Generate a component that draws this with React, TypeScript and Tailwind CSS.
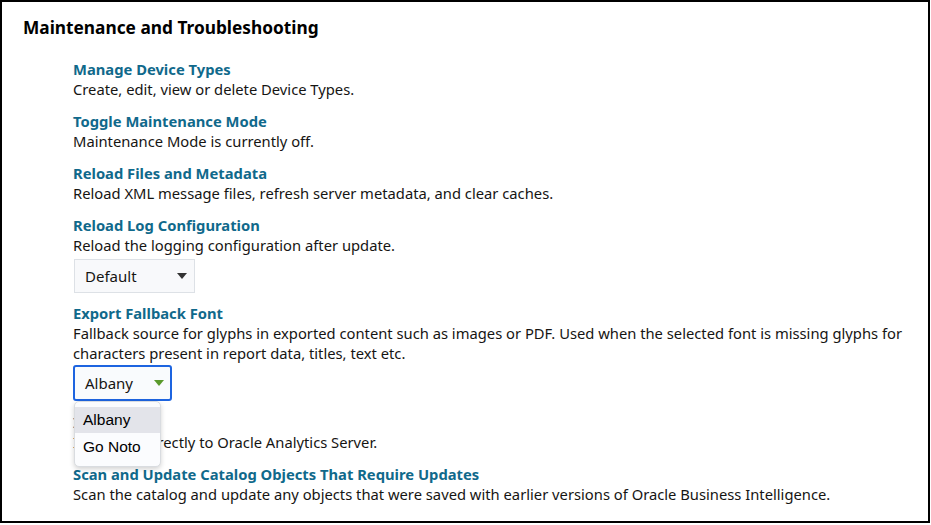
import React from "react";

const items: { title: string; desc: string[] }[] = [
  { title: "Manage Device Types", desc: ["Create, edit, view or delete Device Types."] },
  { title: "Toggle Maintenance Mode", desc: ["Maintenance Mode is currently off."] },
  {
    title: "Reload Files and Metadata",
    desc: ["Reload XML message files, refresh server metadata, and clear caches."],
  },
];

function Caret({ color }: { color: string }) {
  return (
    <svg width="10" height="6" viewBox="0 0 10 6" className="shrink-0">
      <path d="M0 0 L10 0 L5 6 Z" fill={color} />
    </svg>
  );
}

function Item({ title, children, className = "mb-3" }: { title: string; children?: React.ReactNode; className?: string }) {
  return (
    <div className={className}>
      <div className="text-[14.75px] leading-5 font-bold text-[#10698b]">{title}</div>
      {children}
    </div>
  );
}

export default function App() {
  return (
    <div
      className="w-[930px] h-[523px] border-2 border-black bg-white text-[#161513] overflow-hidden"
      style={{ fontFamily: '"Noto Sans", "Open Sans", sans-serif' }}
    >
      <div className="pl-[21px] pt-[14px]">
        <h1 className="text-[17.3px] leading-6 font-bold text-black">Maintenance and Troubleshooting</h1>
      </div>

      <div className="pl-[71px] pt-[19px] pr-4 text-[14.75px]">
        {items.map((it) => (
          <Item key={it.title} title={it.title}>
            {it.desc.map((d) => (
              <div key={d} className="leading-5">
                {d}
              </div>
            ))}
          </Item>
        ))}

        <Item title="Reload Log Configuration" className="mb-[10px]">
          <div className="leading-5">Reload the logging configuration after update.</div>
          <div className="mt-1 ml-px flex items-center justify-between w-[121px] h-[34px] pl-[10px] pr-[7px] bg-[#f8f9fb] border border-[#dde1e6] text-[15px]">
            <span>Default</span>
            <Caret color="#333333" />
          </div>
        </Item>

        <Item title="Export Fallback Font" className="mb-[11px]">
          <div className="leading-5">
            Fallback source for glyphs in exported content such as images or PDF. Used when the selected font is
            missing glyphs for characters present in report data, titles, text etc.
          </div>
          <div className="relative mt-[2px]">
            <div className="flex items-center justify-between w-[99px] h-[36px] pl-[10px] pr-[6px] bg-[#f9fbfd] border-2 border-[#1d64e0] rounded-[3px] text-[15px]">
              <span>Albany</span>
              <Caret color="#5a9a2c" />
            </div>
            <div
              className="absolute left-px top-[36px] z-10 w-[87px] pt-[5px] pb-[6px] bg-[#fbfcfe] border border-[#d9dce0] rounded-[5px] shadow-[0_2px_5px_rgba(0,0,0,0.18)] text-[15.5px] text-black"
              style={{ fontFamily: '"Liberation Sans", Arial, sans-serif' }}
            >
              <div className="h-[26px] flex items-center pl-[8px] bg-[#e3e4ea]">Albany</div>
              <div className="h-[27px] flex items-center pl-[8px]">Go Noto</div>
            </div>
          </div>
        </Item>

        <Item title="Issue SQL">
          <div className="leading-5">Issue SQL directly to Oracle Analytics Server.</div>
        </Item>

        <Item title="Scan and Update Catalog Objects That Require Updates">
          <div className="leading-5">
            Scan the catalog and update any objects that were saved with earlier versions of Oracle Business
            Intelligence.
          </div>
        </Item>
      </div>
    </div>
  );
}
